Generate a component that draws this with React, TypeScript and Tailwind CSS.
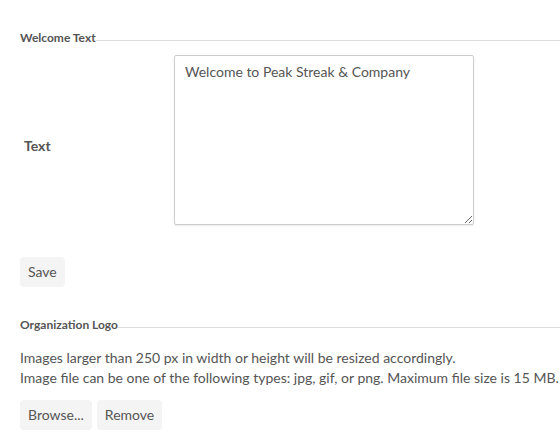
export default function App() {
  return (
    <div className="w-[560px] h-[440px] bg-white overflow-hidden text-[#555] font-['Lato','Liberation_Sans',sans-serif]">
      <div className="pt-[31px] pl-5">
        {/* Welcome Text section */}
        <div className="flex items-center">
          <span className="text-[12px] font-bold leading-[14px] text-[#555]">Welcome Text</span>
          <div className="flex-1 h-px bg-[#ddd] mt-[4px]" />
        </div>

        <div className="flex items-center mt-[10px]">
          <label className="w-[154px] pl-1 pt-[12px] text-sm font-bold">Text</label>
          <textarea
            defaultValue="Welcome to Peak Streak & Company"
            className="w-[300px] h-[170px] border border-[#ccc] rounded-[2px] px-[10px] py-[6px] text-sm leading-5 text-[#555] outline-none shadow-[0_1px_2px_rgba(0,0,0,0.08)]"
          />
        </div>

        <button className="mt-[32px] h-[30px] px-2 rounded bg-[#f4f4f4] text-sm text-[#555]">Save</button>

        {/* Organization Logo section */}
        <div className="flex items-center mt-[31px]">
          <span className="text-[12px] font-bold leading-[14px] text-[#555]">Organization Logo</span>
          <div className="flex-1 h-px bg-[#ddd] mt-[4px]" />
        </div>

        <p className="mt-[16px] text-sm leading-5">
          Images larger than 250 px in width or height will be resized accordingly.
          <br />
          Image file can be one of the following types: jpg, gif, or png. Maximum file size is 15 MB.
        </p>

        <div className="flex gap-[5px] mt-[12px]">
          <button className="h-[30px] px-2 rounded bg-[#f4f4f4] text-sm text-[#555]">Browse...</button>
          <button className="h-[30px] px-2 rounded bg-[#f4f4f4] text-sm text-[#555]">Remove</button>
        </div>
      </div>
    </div>
  );
}
